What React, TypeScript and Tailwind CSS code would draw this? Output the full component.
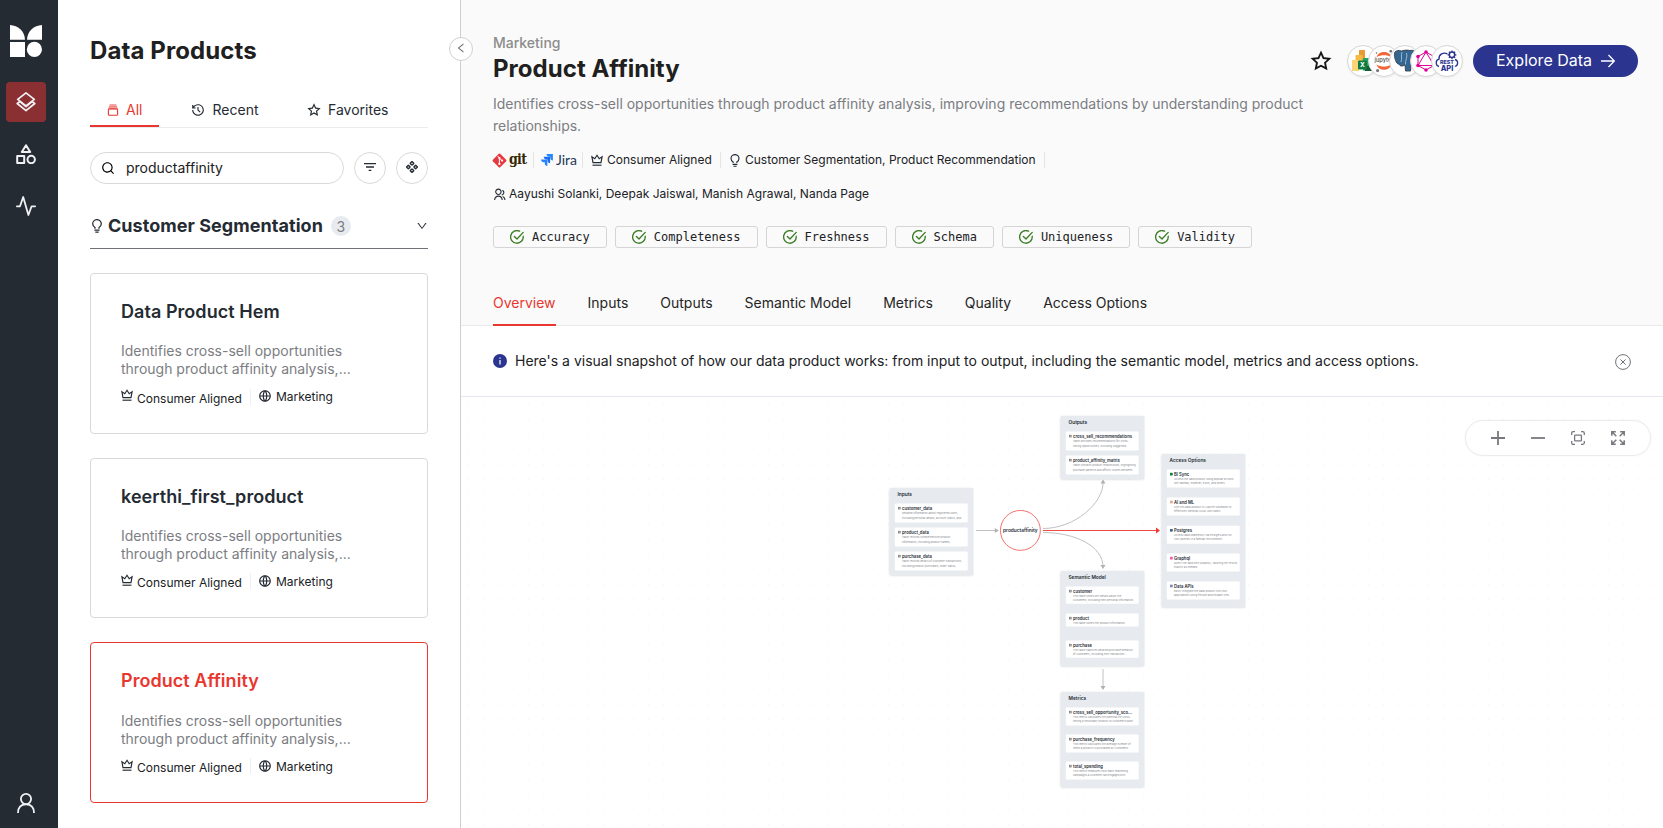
import React from "react";
import { AiOutlineLeft, AiOutlineDown } from "react-icons/ai";
import {
  RiHistoryLine,
  RiStarLine,
  RiSearchLine,
  RiFilter3Line,
  RiGlobalLine,
  RiGroupLine,
} from "react-icons/ri";

type SvgProps = { className?: string };

function LogoMark() {
  return (
    <svg className="size-8" viewBox="0 0 32 32" fill="#fff">
      <path d="M0 0C8 .4 14.6 6 15 14.7H0Z" />
      <path d="M32 0C24 .4 17.400 6 17 14.700H32Z" />
      <path d="M0 17h15v15H0Z" />
      <circle cx="24.400" cy="24.400" r="7.600" />
    </svg>
  );
}

function LayersIcon({ className }: SvgProps) {
  return (
    <svg className={className} viewBox="0 0 20 20" fill="none" stroke="currentColor" strokeWidth="1.7" strokeLinejoin="round" strokeLinecap="round">
      <path d="M10 .9 18.300 7.300 10 13.800 1.700 7.300Z" />
      <path d="M3.400 10 1.200 11.500 10 18.600 18.800 11.500 16.600 10" />
      <path d="M4.300 9.800 10 14.600 15.700 9.800" />
    </svg>
  );
}

function ShapesIcon({ className }: SvgProps) {
  return (
    <svg className={className} viewBox="0 0 20 20" fill="none" stroke="currentColor" strokeWidth="2" strokeLinejoin="round">
      <path d="M10 1.200 14.200 8H5.800Z" />
      <path d="M1.200 12h7v7h-7Z" />
      <circle cx="15.200" cy="15.500" r="3.700" />
    </svg>
  );
}

function PulseIcon({ className }: SvgProps) {
  return (
    <svg className={className} viewBox="0 0 20 20" fill="none" stroke="currentColor" strokeWidth="1.800" strokeLinejoin="round" strokeLinecap="round">
      <path d="M.9 10.300H4L7.200 1 12.400 19 15.600 10.300H19.100" />
    </svg>
  );
}

function UserIcon({ className }: SvgProps) {
  return (
    <svg className={className} viewBox="0 0 20 20" fill="none" stroke="currentColor" strokeWidth="1.800">
      <circle cx="10" cy="6" r="5.100" />
      <path d="M2 20C2 14 5.300 11.300 10 11.300S18 14 18 20" />
    </svg>
  );
}

function JarIcon({ className }: SvgProps) {
  return (
    <svg className={className} viewBox="0 0 12 12" fill="none" stroke="currentColor">
      <path d="M2.600 .8H9.400M2 2.500H10" strokeWidth="1.300" opacity=".6" />
      <rect x="1.400" y="5" width="9.200" height="6.300" rx="1" strokeWidth="1.100" />
      <path d="M1.400 4.300H10.600" strokeWidth="1.700" opacity=".7" />
    </svg>
  );
}

function BulbIcon({ className }: SvgProps) {
  return (
    <svg className={className} viewBox="0 0 10 14" fill="none" stroke="currentColor" strokeWidth="1.250">
      <path d="M3 9.700V8.500C1.500 7.600 .7 6.300 .7 4.800A4.300 4.200 0 0 1 9.300 4.800C9.300 6.300 8.500 7.600 7 8.500V9.700" />
      <path d="M2.400 11.200H7.600M3.300 13.200H6.700" />
    </svg>
  );
}

function ClusterIcon({ className }: SvgProps) {
  return (
    <svg className={className} viewBox="0 0 12 12" fill="none" stroke="currentColor" strokeWidth="1.300">
      <path d="M6 .5 7.800 2.300 6 4.100 4.200 2.300ZM2.300 4.200 4.100 6 2.300 7.800 .5 6ZM9.700 4.200 11.500 6 9.700 7.800 7.900 6ZM6 7.900 7.800 9.700 6 11.500 4.200 9.700Z" strokeLinejoin="round" />
      <path d="M4.700 3.500 3.500 4.700M7.300 3.500 8.500 4.700M4.700 8.500 3.500 7.300M7.300 8.500 8.500 7.300" strokeWidth=".8" />
    </svg>
  );
}

function CrownIcon({ className }: SvgProps) {
  return (
    <svg className={className} viewBox="0 0 12 12" fill="none" stroke="currentColor" strokeWidth="1.150" strokeLinejoin="miter">
      <path d="M2 8.600 .9 2.700 3.800 4.700 6 1.300 8.200 4.700 11.100 2.700 10 8.600Z" />
      <path d="M1.500 11.200H10.500" />
    </svg>
  );
}

function CheckIcon() {
  return (
    <svg className="size-3.5" viewBox="0 0 14 14" fill="none" stroke="#3a7d24" strokeWidth="1.350" strokeLinecap="round" strokeLinejoin="round">
      <path d="M13.200 6.300A6.300 6.300 0 1 1 9.600 1.200" />
      <path d="M4.400 6.500 7 9 13.200 2.400" />
    </svg>
  );
}

function GitLogo() {
  return (
    <span className="flex w-[35px] shrink-0 items-center">
      <svg className="-ml-[1px] size-[15px] shrink-0" viewBox="0 0 15 15">
        <rect x="2.300" y="2.300" width="10.400" height="10.400" rx="1" transform="rotate(45 7.500 7.500)" fill="#e8373e" />
        <path d="M5.600 3 7.400 4.900V11M7.600 5.200 10 7.600" stroke="#fff" strokeWidth="1" fill="none" />
        <circle cx="7.400" cy="10.900" r="1.100" fill="#fff" />
        <circle cx="10.100" cy="7.600" r="1.100" fill="#fff" />
        <circle cx="7.400" cy="5.100" r="1.100" fill="#fff" />
      </svg>
      <span className="ml-[2px] -mt-[3px] font-['DejaVu_Serif_Condensed','DejaVu_Serif',serif] text-[14px] leading-[22px] font-bold tracking-[-0.7px] text-[#362701]">git</span>
    </span>
  );
}

function JiraLogo() {
  return (
    <span className="flex w-[36px] shrink-0 items-center">
      <svg className="size-3" viewBox="0 0 12 12">
        <path d="M5.600 0H12V6.400C10.500 6.400 9.400 5.300 9.400 4V2.700H8.200C6.700 2.700 5.600 1.500 5.600 0Z" fill="#2684ff" />
        <path d="M2.800 2.800H9.200V9.200C7.700 9.200 6.600 8.100 6.600 6.700V5.500H5.400C3.900 5.500 2.800 4.300 2.800 2.800Z" fill="#1c6cf0" />
        <path d="M0 5.600H6.400V12C4.900 12 3.800 10.900 3.800 9.500V8.300H2.600C1.100 8.300 0 7.100 0 5.600Z" fill="#2684ff" />
      </svg>
      <span className="ml-[3px] font-['Lato',sans-serif] text-[14px] leading-[22px] text-[#253858]">Jira</span>
    </span>
  );
}

function Rail() {
  return (
    <nav className="flex w-[58px] shrink-0 flex-col items-center bg-[#252b33] pr-[6px] text-[#f0f1f3]">
      <div className="mt-[25px]"><LogoMark /></div>
      <div className="mt-[25px] flex size-10 items-center justify-center rounded bg-[#8b3032]">
        <LayersIcon className="size-5" />
      </div>
      <ShapesIcon className="mt-[22px] size-5" />
      <PulseIcon className="mt-8 size-5" />
      <UserIcon className="mt-auto mb-[15px] size-5" />
    </nav>
  );
}

const products = [
  { name: "Data Product Hem", active: false },
  { name: "keerthi_first_product", active: false },
  { name: "Product Affinity", active: true },
];

function ProductCard({ name, active }: { name: string; active: boolean }) {
  return (
    <article className={`h-[160.667px] shrink-0 rounded border px-[30px] pt-6 ${active ? "border-[#e8372f]" : "border-[#d9d9d9]"}`}>
      <h3 className={`text-[18px] leading-7 font-semibold tracking-[0.050px] ${active ? "text-[#e8372f]" : "text-[#252b33]"}`}>{name}</h3>
      <p className="mt-[16.300px] text-[14px] leading-[18px] whitespace-nowrap text-[#7b7d82]">
        Identifies cross-sell opportunities
        <br />
        through product affinity analysis,...
      </p>
      <div className="mt-[9.400px] flex items-start text-[12px] leading-[18px] text-[#202124]">
        <CrownIcon className="mt-[1.500px] mr-1 size-3 text-[#252b33]" />
        <span className="mt-[2px] w-[105px]">Consumer Aligned</span>
        <span className="mt-[1px] mr-[7px] ml-2 h-4 w-px bg-[#efefef]" />
        <RiGlobalLine className="mt-[1.500px] mr-1 size-[14px] text-[#252b33]" />
        <span className="mt-[0.600px]">Marketing</span>
      </div>
    </article>
  );
}

function ProductPanel() {
  return (
    <aside className="relative flex w-[403px] shrink-0 flex-col border-r border-[#cfcfcf] bg-white pr-8 pl-8">
      <h1 className="mt-[35px] text-[24px] leading-8 font-bold tracking-[0.100px] text-[#202020]">Data Products</h1>
      <div className="mt-[26px] flex h-[35px] border-b border-[#ebebeb] text-[14px] leading-[34px] text-[#252b33]">
        <div className="flex h-[34px] w-[68.500px] items-center border-b-2 border-[#e8372f] pt-[2px] pl-[17px] text-[#e8372f]">
          <JarIcon className="mr-[7px] size-3" />All
        </div>
        <div className="ml-[32.500px] flex h-[34px] items-center">
          <RiHistoryLine className="mr-[7.500px] size-[14px]" />Recent
        </div>
        <div className="ml-[48.500px] flex h-[34px] items-center">
          <RiStarLine className="mr-[7px] size-[14px]" />Favorites
        </div>
      </div>
      <div className="mt-6 flex h-8 gap-[10px]">
        <div className="flex w-[254px] items-center rounded-full border border-[#d9d9d9] pl-[10px] text-[14px] text-[#202020]">
          <RiSearchLine className="mr-[11px] size-[14px] text-black" />
          <span className="pb-[2px]">productaffinity</span>
        </div>
        <button className="flex size-8 items-center justify-center rounded-full border border-[#d9d9d9] pb-[2px] text-[#252b33]">
          <RiFilter3Line className="size-4" />
        </button>
        <button className="flex size-8 items-center justify-center rounded-full border border-[#d9d9d9] pb-[2px] text-[#252b33]">
          <ClusterIcon className="size-3" />
        </button>
      </div>
      <div className="mt-5 flex h-[45px] items-center border-b border-[#6f7277]">
        <BulbIcon className="mr-[6px] ml-[2px] h-[14px] w-[10px] text-[#252b33]" />
        <h2 className="text-[18px] leading-7 font-bold tracking-[0.050px] text-[#252b33]">Customer Segmentation</h2>
        <span className="ml-2 flex size-5 items-center justify-center rounded-full bg-[#e7eaee] text-[14px] text-[#7b7d82]">3</span>
        <AiOutlineDown className="ml-auto size-3 text-[#252b33]" />
      </div>
      <div className="mt-6 flex flex-col gap-6">
        {products.map((p) => <ProductCard key={p.name} {...p} />)}
      </div>
      <button className="absolute top-[37px] -right-[13px] z-10 flex size-6 items-center justify-center rounded-full border border-[#d0d0d0] bg-white pb-[2px] text-[#5f6368]">
        <AiOutlineLeft className="size-3" />
      </button>
    </aside>
  );
}

function Badge({ children }: { children: React.ReactNode }) {
  return (
    <div className="-mr-[11px] flex size-8 items-center justify-center overflow-hidden rounded-full border border-[#d6d6d6] bg-white shadow-[0_1px_2px_rgba(0,0,0,0.06)]">
      {children}
    </div>
  );
}

function SheetsLogo() {
  return (
    <svg className="size-6" viewBox="0 0 24 24">
      <rect x="8" y="1" width="6" height="14" rx=".5" fill="#e99a33" />
      <rect x="4.500" y="6" width="7" height="12" rx=".5" fill="#f5bc44" />
      <rect x="1" y="11" width="7" height="11" rx=".5" fill="#fbd476" />
      <path d="M12 9h10v12.500h-10Z" fill="#21a366" />
      <path d="M14 17h8v5h-8Z" fill="#185c37" />
      <rect x="7" y="11.500" width="9" height="9" rx="1" fill="#107c41" />
      <text x="11.500" y="18.400" fontSize="6.500" fontWeight="700" fill="#fff" textAnchor="middle">X</text>
    </svg>
  );
}

function JupyterLogo() {
  return (
    <svg className="size-6" viewBox="0 0 24 24">
      <path d="M4.500 8.200C6.500 1.200 17.500 1.200 19.500 8.200 15 5.600 9 5.600 4.500 8.200Z" fill="#f2673a" />
      <path d="M4.500 15.500C6.500 22.500 17.500 22.500 19.500 15.500 15 18.200 9 18.200 4.500 15.500Z" fill="#f2673a" />
      <text x="12" y="13.300" fontSize="5.700" fontWeight="500" fill="#4e4e4e" textAnchor="middle">jupyter</text>
      <circle cx="18.800" cy="2.300" r="1.300" fill="#6a6a6a" />
      <circle cx="4.500" cy="4" r=".8" fill="#6a6a6a" />
      <circle cx="5.600" cy="21.600" r="1.600" fill="#7a7a7a" />
    </svg>
  );
}

function PostgresLogo() {
  return (
    <svg className="size-6" viewBox="0 0 24 24">
      <path d="M1.500 4C2 1.500 6 .8 8.500 2 12 .8 15 .9 17 1.600 20 .6 23 2 22.500 6 22 10 19.500 13 19 15.500L18 16 17.500 22H12.500L12 16C9 17.500 7 17.500 6 15 3.500 16 .8 8 1.500 4Z" fill="#336791" stroke="#3b4249" strokeWidth=".9" />
      <path d="M9 3C7.500 7 9.500 9 8 13M12.500 15.500C12 11 15 8 13.500 4" stroke="#a9c3d8" strokeWidth=".9" fill="none" />
    </svg>
  );
}

function GraphqlLogo() {
  return (
    <svg className="size-[22px]" viewBox="0 0 22 22" fill="none" stroke="#e10098" strokeWidth="1">
      <path d="M11 2 19 6.500V15.500L11 20 3 15.500V6.500Z" />
      <path d="M11 2 3 15.500H19Z" />
      <g fill="#e10098" stroke="none">
        <circle cx="11" cy="2" r="1.800" /><circle cx="19" cy="6.500" r="1.800" /><circle cx="19" cy="15.500" r="1.800" />
        <circle cx="11" cy="20" r="1.800" /><circle cx="3" cy="15.500" r="1.800" /><circle cx="3" cy="6.500" r="1.800" />
      </g>
    </svg>
  );
}

function RestLogo() {
  return (
    <svg className="size-6" viewBox="0 0 24 24" fill="none" stroke="#2b3590" strokeWidth="1.300">
      <path d="M4 17.500C.3 16.500.3 10.800 4 10.200 3.500 5.500 8.500 2.500 12.500 5M20 10.500C23.600 11.500 23.400 16.500 20 17.500" />
      <circle cx="17" cy="5.800" r="2.700" strokeWidth="1.500" />
      <path d="M17 1.400V3M17 8.600V10.200M12.600 5.800H14.200M19.800 5.800H21.400M13.900 2.700 15 3.800M19 7.800 20.100 8.900M20.100 2.700 19 3.800M13.900 8.900 15 7.800" strokeWidth="1.300" />
      <text x="12" y="15" fontSize="5.400" fontWeight="800" fill="#2b3590" stroke="none" textAnchor="middle">REST</text>
      <text x="12" y="22" fontSize="7.400" fontWeight="800" fill="#2b3590" stroke="none" textAnchor="middle">API</text>
    </svg>
  );
}

const Divider = ({ className }: SvgProps) => <span className={`h-4 w-px shrink-0 bg-[#e4e4e4] ${className ?? ""}`} />;

const checks = ["Accuracy", "Completeness", "Freshness", "Schema", "Uniqueness", "Validity"];
const tabs = ["Overview", "Inputs", "Outputs", "Semantic Model", "Metrics", "Quality", "Access Options"];

function Header() {
  return (
    <header className="flex h-[326px] shrink-0 flex-col border-b border-[#e9e9eb] bg-[#fafafa] pr-[25px] pl-8">
      <div className="flex h-[137px] shrink-0 justify-between pt-8">
        <div className="w-[840px]">
          <div className="text-[14px] leading-[22px] font-medium text-[#8c8c8c]">Marketing</div>
          <h1 className="mt-[1px] text-[24px] leading-7 font-bold tracking-[0.050px] text-[#202020]">Product Affinity</h1>
          <p className="mt-[10px] text-[14px] leading-[22px] text-[#7b7d82]">
            Identifies cross-sell opportunities through product affinity analysis, improving recommendations by understanding product relationships.
          </p>
        </div>
        <div className="mt-[13px] flex h-8 items-center">
          <RiStarLine className="mr-[15px] size-[22px] text-[#151515]" />
          <div className="flex pr-[21px]">
            <Badge><SheetsLogo /></Badge>
            <Badge><JupyterLogo /></Badge>
            <Badge><PostgresLogo /></Badge>
            <Badge><GraphqlLogo /></Badge>
            <Badge><RestLogo /></Badge>
          </div>
          <button className="flex h-8 w-[165px] items-center rounded-full bg-[#2b3590] pl-[23px] text-[16px] text-white">
            <span className="w-[95px] pb-[2px] whitespace-nowrap">Explore Data</span>
            <svg className="ml-[10px] size-[14px]" viewBox="0 0 14 14" fill="none" stroke="currentColor" strokeWidth="1.300">
              <path d="M0 7H13M7.500 1 13.300 7 7.500 13" />
            </svg>
          </button>
        </div>
      </div>
      <div className="mt-3 flex h-[22px] shrink-0 items-center text-[12px] whitespace-nowrap text-[#202124]">
        <GitLogo />
        <Divider className="mr-[7px] ml-[5px]" />
        <JiraLogo />
        <Divider className="mr-2 ml-[5px]" />
        <CrownIcon className="mr-1 size-3 text-[#252b33]" />
        <span className="w-[105px]">Consumer Aligned</span>
        <Divider className="mx-2" />
        <BulbIcon className="mr-[5px] ml-[1px] h-[13px] w-[10px] text-[#252b33]" />
        <span>Customer Segmentation, Product Recommendation</span>
        <Divider className="ml-2" />
      </div>
      <div className="mt-3 flex h-[22px] shrink-0 items-center text-[12px] text-[#202124]">
        <RiGroupLine className="mr-[3px] size-[13px] text-[#252b33]" />
        <span className="tracking-[0.020px]">Aayushi Solanki, Deepak Jaiswal, Manish Agrawal, Nanda Page</span>
      </div>
      <div className="mt-[21px] flex shrink-0 gap-2">
        {checks.map((c) => (
          <span key={c} className="flex h-[22px] items-center gap-2 rounded-[3px] border border-[#d5d5d5] px-4 font-['DejaVu_Sans_Mono',monospace] text-[12px] text-[#202124]">
            <CheckIcon />{c}
          </span>
        ))}
      </div>
      <div className="mt-[31px] flex h-[46px] shrink-0 gap-8 text-[14px] leading-[47px] text-[#252525]">
        {tabs.map((t, i) => (
          <span key={t} className={i === 0 ? "h-[47px] border-b-2 border-[#e8372f] text-[#e8372f]" : "h-[46px]"}>{t}</span>
        ))}
      </div>
    </header>
  );
}

function InfoBar() {
  return (
    <div className="flex h-[71px] shrink-0 items-center border-b border-[#e6e6ef] pr-8 pl-8 text-[14px] text-[#202124]">
      <svg className="mr-2 size-[14px]" viewBox="0 0 14 14">
        <circle cx="7" cy="7" r="7" fill="#2b3590" />
        <path d="M7 6V10.500M7 3.400V4.700" stroke="#fff" strokeWidth="1.200" />
      </svg>
      <span className="pb-[2px]">
        Here's a visual snapshot of how our data product works: from input to output, including the semantic model, metrics and access options.
      </span>
      <svg className="mt-[2px] ml-auto size-4 text-[#6f7277]" viewBox="0 0 16 16" fill="none" stroke="currentColor" strokeWidth="1">
        <circle cx="8" cy="8" r="7.400" />
        <path d="M5.400 5.400 10.600 10.600M10.600 5.400 5.400 10.600" />
      </svg>
    </div>
  );
}

type Item = { name: string; lines: string[]; dot?: string };
type Group = { title: string; x: number; y: number; w: number; h: number; pitch: number; cardH: number[]; items: Item[] };

const ZOOM = 0.3;

/* Node positions and sizes are in canvas coordinates, after zooming. */
const groups: Group[] = [
  {
    title: "Inputs", x: 429.300, y: 90.500, w: 83.300, h: 87.200, pitch: 24, cardH: [19, 19, 19],
    items: [
      { name: "customer_data", lines: ["Detailed information about registered users,", "including personal details, account status, and..."] },
      { name: "product_data", lines: ["Table records comprehensive product", "information, including product names,..."] },
      { name: "purchase_data", lines: ["Table records details of customer transactions,", "including product purchases, order status,..."] },
    ],
  },
  {
    title: "Outputs", x: 600.300, y: 19.200, w: 83.300, h: 63, pitch: 24, cardH: [19, 19],
    items: [
      { name: "cross_sell_recommendations", lines: ["Table provides recommendations for cross-", "selling opportunities, including suggested..."] },
      { name: "product_affinity_matrix", lines: ["Table contains product relationships, highlighting", "purchase patterns and affinity scores between..."] },
    ],
  },
  {
    title: "Access Options", x: 700.700, y: 57.400, w: 83.500, h: 153.500, pitch: 28, cardH: [18, 18, 18, 18, 18],
    items: [
      { name: "BI Sync", dot: "#107c41", lines: ["Access the data product using popular BI tools", "like Tableau, PowerBI, Excel, and others"] },
      { name: "AI and ML", dot: "#e3a793", lines: ["Use this data product in Jupyter Notebook to", "effectively develop AI/ML use cases."] },
      { name: "Postgres", dot: "#336791", lines: ["Access data seamlessly via Postgres and run", "your queries in a familiar environment."] },
      { name: "Graphql", dot: "#ee5cb9", lines: ["Query the data with GraphQL, tailoring the results", "exactly as needed."] },
      { name: "Data APIs", dot: "#8087c0", lines: ["Easily integrate the data product into your", "applications using flexible and reliable APIs."] },
    ],
  },
  {
    title: "Semantic Model", x: 600.300, y: 174.400, w: 83.300, h: 95.500, pitch: 27, cardH: [17, 13, 17],
    items: [
      { name: "customer", lines: ["This table stores key details about the", "customers, including their personal information..."] },
      { name: "product", lines: ["This table stores the product information."] },
      { name: "purchase", lines: ["This table captures detailed purchase behavior", "of customers, including their transaction..."] },
    ],
  },
  {
    title: "Metrics", x: 600.300, y: 295.400, w: 83.300, h: 95.500, pitch: 27, cardH: [18, 18, 18],
    items: [
      { name: "cross_sell_opportunity_sco...", lines: ["This metric calculates the potential for cross-", "selling a secondary product to customers base..."] },
      { name: "purchase_frequency", lines: ["This metric calculates the average number of", "times a product is purchased by customers..."] },
      { name: "total_spending", lines: ["This metric measures how many marketing", "campaigns a customer has engaged with."] },
    ],
  },
];

function NodeGroup({ g }: { g: Group }) {
  return (
    <section
      className="absolute origin-top-left scale-[0.3] bg-[#e7eaee] pl-4 shadow-[0_2px_9px_rgba(0,0,0,0.220)]"
      style={{ left: g.x, top: g.y, width: g.w / ZOOM, height: g.h / ZOOM }}
    >
      <h4 className="h-[52px] pt-2 pl-[9px] text-[16px] leading-6 font-semibold text-[#252b33]">{g.title}</h4>
      {g.items.map((it, i) => (
        <div key={it.name} style={{ height: g.pitch / ZOOM }}>
          <div className="flex w-[243px] rounded-[3px] bg-white pt-[7px] pl-[11px]" style={{ height: g.cardH[i] / ZOOM }}>
            <span className="mt-1 mr-[5px] size-[8px] shrink-0 border-2 border-[#70747a] bg-[#c9cbd0]" style={{ borderColor: it.dot, backgroundColor: it.dot }} />
            <div className="whitespace-nowrap">
              <div className="text-[14px] leading-[17px] font-semibold text-[#252b33]">{it.name}</div>
              {it.lines.map((l) => (
                <div key={l} className={`text-[9px] text-[#85878c] ${g.pitch === 24 ? "leading-[16px]" : "leading-[14px]"}`}>{l}</div>
              ))}
            </div>
          </div>
        </div>
      ))}
    </section>
  );
}

function Edges() {
  return (
    <svg className="absolute inset-0 size-full" fill="none" stroke="#b9b9be" strokeWidth="0.900">
      <path d="M515 133.500H535" />
      <path d="M582 131.500C614 131.500 642 106 642 86" />
      <path d="M582 135.500C614 135.500 642 149 642 170" />
      <path d="M642 272V291" />
      <path d="M582 133.500H697" stroke="#ee4b44" strokeWidth="1" />
      <g fill="#b0b0b6" stroke="none">
        <path d="M533.800 131 537.800 133.500 533.800 136Z" />
        <path d="M639.500 86.500 642 82.500 644.500 86.500Z" />
        <path d="M639.500 168 642 172 644.500 168Z" />
        <path d="M639.500 289 642 293 644.500 289Z" />
        <path d="M695 130.500 699 133.500 695 136.500Z" fill="#ee3a33" />
      </g>
    </svg>
  );
}

function Canvas() {
  return (
    <div className="relative flex-1 overflow-hidden bg-[radial-gradient(#f3f3f3_0.6px,transparent_0.9px)] bg-[size:15px_15px]">
      <Edges />
      {groups.map((g) => <NodeGroup key={g.title} g={g} />)}
      <div className="absolute top-[113px] left-[539px] flex size-[136px] origin-top-left scale-[0.3] items-center justify-center rounded-full border-3 border-[#f0625c] bg-white text-[16px] font-semibold text-[#252b33]">
        productaffinity
      </div>
      <div className="absolute top-[23px] right-[12px] flex h-9 w-[186px] items-center justify-center gap-[26px] rounded-full border border-[#ececec] bg-white text-[#77797e] shadow-[0_0_2px_rgba(0,0,0,0.06)]">
        <svg className="size-[14px]" viewBox="0 0 14 14" stroke="currentColor" strokeWidth="1.800"><path d="M7 0V14M0 7H14" /></svg>
        <svg className="size-[14px]" viewBox="0 0 14 14" stroke="currentColor" strokeWidth="1.800"><path d="M0 7H14" /></svg>
        <svg className="size-[14px]" viewBox="0 0 14 14" fill="none" stroke="currentColor" strokeWidth="1.300">
          <path d="M.7 4V2.200Q.7 .7 2.200 .7H4M10 .7H11.800Q13.300 .7 13.300 2.200V4M13.300 10V11.800Q13.300 13.300 11.800 13.300H10M4 13.300H2.200Q.7 13.300 .7 11.800V10" />
          <rect x="3.600" y="4.200" width="6.800" height="5.600" rx=".6" />
        </svg>
        <svg className="size-[14px]" viewBox="0 0 14 14" fill="none" stroke="currentColor" strokeWidth="1.500">
          <path d="M.8 4.800V.8H4.800M.8 .8 5.300 5.300M9.200 .8H13.200V4.800M13.200 .8 8.700 5.300M13.200 9.200V13.200H9.200M13.200 13.200 8.700 8.700M4.800 13.200H.8V9.200M.8 13.200 5.300 8.700" />
        </svg>
      </div>
    </div>
  );
}

export default function App() {
  return (
    <div className="flex h-[828px] w-[1663px] overflow-hidden bg-white font-['Inter',sans-serif]">
      <Rail />
      <ProductPanel />
      <main className="flex min-w-0 flex-1 flex-col">
        <Header />
        <InfoBar />
        <Canvas />
      </main>
    </div>
  );
}
